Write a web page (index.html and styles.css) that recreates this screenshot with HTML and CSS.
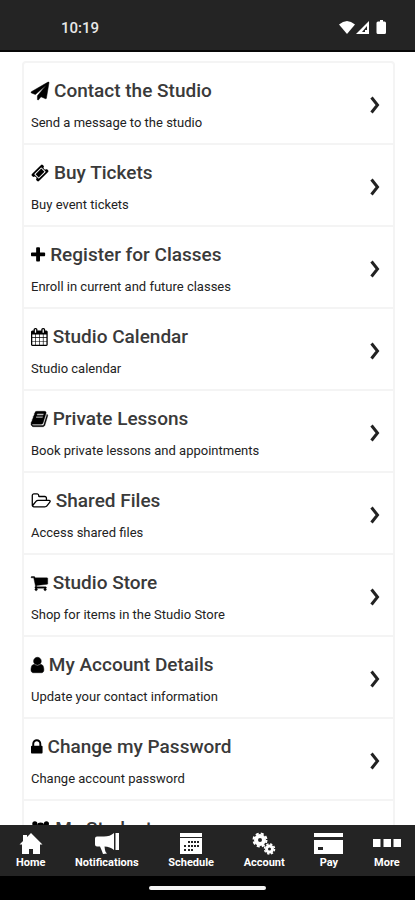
FILE: index.html
```html
<!DOCTYPE html>
<html lang="en">
<head>
<meta charset="utf-8">
<meta name="viewport" content="width=device-width, initial-scale=1">
<title>Studio</title>
<link rel="stylesheet" href="styles.css">
</head>
<body>
<header class="status">
  <time class="clock">10:19</time>
  <svg class="status-icons" width="50" height="18" viewBox="0 0 50 18" fill="#fff" aria-hidden="true">
    <path d="M1 5.500Q9 -1.500 17 5.500L9 15Z"/>
    <path d="M18 15L31 2V15Z"/>
    <path d="M24 13L29 7V13Z" fill="#242424"/>
    <path d="M27 11H29V13H27Z"/>
    <path d="M39.500 2.500H42V1H45V2.500H46.500Q48 2.500 48 4V13.500Q48 15 46.500 15H40Q38.500 15 38.500 13.500V4Q38.500 2.500 40 2.500Z"/>
  </svg>
</header>
<main class="content">
  <ul class="menu">
    <li><a class="row" href="#contact">
      <span class="text"><span class="title"><svg class="icon" viewBox="0 0 1792 1792" aria-hidden="true"><path stroke="#000" stroke-width="50" d="M1764 11q33 24 27 64l-256 1536q-5 29-32 45-14 8-31 8-11 0-24-5l-453-185-242 295q-18 23-49 23-13 0-22-4-19-7-30.500-23.500t-11.500-36.500v-349l864-1059-1069 925-395-162q-37-14-40-55-2-40 32-59l1664-960q15-9 32-9 20 0 36 11z"/></svg>Contact the Studio</span><span class="sub">Send a message to the studio</span></span>
      <svg class="chevron" viewBox="0 0 10 18" aria-hidden="true"><path d="M1.500 1.500L7.500 9L1.500 16.500"/></svg>
    </a></li>
    <li><a class="row" href="#tickets">
      <span class="text"><span class="title"><svg class="icon" viewBox="0 0 1792 1792" aria-hidden="true"><path fill-rule="evenodd" d="M1024 452l316 316-572 572-316-316zm-211 979l618-618q19-19 19-45t-19-45l-362-362q-18-18-45-18t-45 18l-618 618q-19 19-19 45t19 45l362 362q18 18 45 18t45-18zm889-637l-907 908q-37 37-90.500 37t-90.500-37l-126-125q56-56 56-136t-56-136-136-56-136 56l-125-126q-37-37-37-90.500t37-90.500l907-906q37-37 90.500-37t90.500 37l125 125q-56 56-56 136t56 136 136 56 136-56l126 125q37 37 37 90.500t-37 90.500z"/></svg>Buy Tickets</span><span class="sub">Buy event tickets</span></span>
      <svg class="chevron" viewBox="0 0 10 18" aria-hidden="true"><path d="M1.500 1.500L7.500 9L1.500 16.500"/></svg>
    </a></li>
    <li><a class="row" href="#register">
      <span class="text"><span class="title"><svg class="icon" viewBox="192 0 1408 1792" aria-hidden="true"><path d="M1600 736v192q0 40-28 68t-68 28h-416v416q0 40-28 68t-68 28h-192q-40 0-68-28t-28-68v-416h-416q-40 0-68-28t-28-68v-192q0-40 28-68t68-28h416v-416q0-40 28-68t68-28h192q40 0 68 28t28 68v416h416q40 0 68 28t28 68z"/></svg>Register for Classes</span><span class="sub">Enroll in current and future classes</span></span>
      <svg class="chevron" viewBox="0 0 10 18" aria-hidden="true"><path d="M1.500 1.500L7.500 9L1.500 16.500"/></svg>
    </a></li>
    <li><a class="row" href="#calendar">
      <span class="text"><span class="title"><svg class="icon" viewBox="64 0 1664 1792" aria-hidden="true"><path d="M192 1664h288v-288h-288v288zm352 0h320v-288h-320v288zm-352-352h288v-320h-288v320zm352 0h320v-320h-320v320zm-352-384h288v-288h-288v288zm736 736h320v-288h-320v288zm-384-736h320v-288h-320v288zm768 736h288v-288h-288v288zm-384-352h320v-320h-320v320zm-352-864v-288q0-13-9.500-22.500t-22.500-9.500h-64q-13 0-22.500 9.500t-9.500 22.500v288q0 13 9.500 22.500t22.500 9.500h64q13 0 22.500-9.500t9.500-22.500zm736 864h288v-320h-288v320zm-384-384h320v-288h-320v288zm384 0h288v-288h-288v288zm32-480v-288q0-13-9.500-22.500t-22.500-9.500h-64q-13 0-22.500 9.500t-9.500 22.500v288q0 13 9.500 22.500t22.500 9.500h64q13 0 22.500-9.500t9.500-22.500zm384-64v1280q0 52-38 90t-90 38h-1408q-52 0-90-38t-38-90v-1280q0-52 38-90t90-38h128v-96q0-66 47-113t113-47h64q66 0 113 47t47 113v96h384v-96q0-66 47-113t113-47h64q66 0 113 47t47 113v96h128q52 0 90 38t38 90z"/></svg>Studio Calendar</span><span class="sub">Studio calendar</span></span>
      <svg class="chevron" viewBox="0 0 10 18" aria-hidden="true"><path d="M1.500 1.500L7.500 9L1.500 16.500"/></svg>
    </a></li>
    <li><a class="row" href="#lessons">
      <span class="text"><span class="title"><svg class="icon" viewBox="64 0 1664 1792" aria-hidden="true"><path stroke="#000" stroke-width="40" d="M1703 478q40 57 18 129l-275 906q-19 64-76.500 107.500t-122.500 43.500h-923q-77 0-148.500-53.500t-99.500-131.500q-24-67-2-127 0-4 3-27t4-37q1-8-3-21.500t-3-19.500q2-11 8-21t16.500-23.500 16.500-23.500q23-38 45-91.500t30-91.500q3-10 .5-30t-.5-28q3-11 17-28t17-23q21-36 42-92t25-90q1-9-2.500-32t.5-28q4-13 22-30.500t22-22.500q19-26 42.500-84.500t27.500-96.500q1-8-3-25.500t-2-26.500q2-8 9-18t18-23 17-21q8-12 16.500-30.500t15-35 16-36 19.500-32 26.500-23.500 36-11.500 47.500 5.500l-1 3q38-9 51-9h761q74 0 114 56t18 130l-274 906q-36 119-71.500 153.500t-128.500 34.500h-869q-27 0-38 15-11 16-1 43 24 70 144 70h923q29 0 56-15.500t35-41.500l300-987q7-22 5-57 38 15 59 43zm-1064 2q-4 13 2 22.500t20 9.500h608q13 0 25.500-9.500t16.500-22.500l21-64q4-13-2-22.500t-20-9.500h-608q-13 0-25.500 9.500t-16.500 22.500zm-83 256q-4 13 2 22.500t20 9.500h608q13 0 25.500-9.500t16.500-22.500l21-64q4-13-2-22.500t-20-9.500h-608q-13 0-25.500 9.500t-16.500 22.500z"/></svg>Private Lessons</span><span class="sub">Book private lessons and appointments</span></span>
      <svg class="chevron" viewBox="0 0 10 18" aria-hidden="true"><path d="M1.500 1.500L7.500 9L1.500 16.500"/></svg>
    </a></li>
    <li><a class="row" href="#files">
      <span class="text"><span class="title"><svg class="icon" viewBox="0 0 1973 1792" aria-hidden="true"><path d="M1845 931q0-35-53-35h-1088q-40 0-85.500 21.500t-71.500 52.500l-294 363q-18 24-18 40 0 35 53 35h1088q40 0 86-22t71-53l294-363q18-22 18-39zm-1141-163h768v-160q0-40-28-68t-68-28h-576q-40 0-68-28t-28-68v-64q0-40-28-68t-68-28h-320q-40 0-68 28t-28 68v853l256-315q44-53 116-87.500t140-34.500zm1269 163q0 62-46 120l-295 363q-43 53-116 87.500t-140 34.500h-1088q-92 0-158-66t-66-158v-960q0-92 66-158t158-66h320q92 0 158 66t66 158v32h544q92 0 158 66t66 158v160h192q54 0 99 24.500t67 70.500q15 32 15 68z"/></svg>Shared Files</span><span class="sub">Access shared files</span></span>
      <svg class="chevron" viewBox="0 0 10 18" aria-hidden="true"><path d="M1.500 1.500L7.500 9L1.500 16.500"/></svg>
    </a></li>
    <li><a class="row" href="#store">
      <span class="text"><span class="title"><svg class="icon" viewBox="64 0 1664 1792" aria-hidden="true"><path stroke="#000" stroke-width="40" d="M704 1536q0 52-38 90t-90 38-90-38-38-90 38-90 90-38 90 38 38 90zm896 0q0 52-38 90t-90 38-90-38-38-90 38-90 90-38 90 38 38 90zm128-1088v512q0 24-16.500 42.500t-40.500 21.500l-1044 122q13 60 13 70 0 16-24 64h920q26 0 45 19t19 45-19 45-45 19h-1024q-26 0-45-19t-19-45q0-11 8-31.500t16-36 21.500-40 15.500-29.500l-177-823h-204q-26 0-45-19t-19-45 19-45 45-19h256q16 0 28.500 6.500t19.500 15.500 13 24.500 8 26 5.500 29.500 4.500 26h1201q26 0 45 19t19 45z"/></svg>Studio Store</span><span class="sub">Shop for items in the Studio Store</span></span>
      <svg class="chevron" viewBox="0 0 10 18" aria-hidden="true"><path d="M1.500 1.500L7.500 9L1.500 16.500"/></svg>
    </a></li>
    <li><a class="row" href="#account-details">
      <span class="text"><span class="title"><svg class="icon" viewBox="256 0 1280 1792" aria-hidden="true"><path stroke="#000" stroke-width="50" d="M1536 1399q0 109-62.500 187t-150.500 78h-854q-88 0-150.500-78t-62.500-187q0-85 8.500-160.500t31.500-152 58.500-131 94-89 134.500-34.500q131 128 313 128t313-128q76 0 134.500 34.500t94 89 58.500 131 31.500 152 8.500 160.500zm-256-887q0 159-112.500 271.500t-271.500 112.500-271.500-112.500-112.500-271.500 112.500-271.500 271.500-112.500 271.500 112.500 112.500 271.500z"/></svg>My Account Details</span><span class="sub">Update your contact information</span></span>
      <svg class="chevron" viewBox="0 0 10 18" aria-hidden="true"><path d="M1.500 1.500L7.500 9L1.500 16.500"/></svg>
    </a></li>
    <li><a class="row" href="#password">
      <span class="text"><span class="title"><svg class="icon" viewBox="320 0 1152 1792" aria-hidden="true"><path d="M640 768h512v-192q0-106-75-181t-181-75-181 75-75 181v192zm832 96v576q0 40-28 68t-68 28h-960q-40 0-68-28t-28-68v-576q0-40 28-68t68-28h32v-192q0-184 132-316t316-132 316 132 132 316v192h32q40 0 68 28t28 68z"/></svg>Change my Password</span><span class="sub">Change account password</span></span>
      <svg class="chevron" viewBox="0 0 10 18" aria-hidden="true"><path d="M1.500 1.500L7.500 9L1.500 16.500"/></svg>
    </a></li>
    <li><a class="row" href="#students">
      <span class="text"><span class="title"><svg class="icon" viewBox="0 0 1920 1792" aria-hidden="true"><circle cx="384" cy="384" r="256"/><circle cx="1536" cy="384" r="256"/><circle cx="960" cy="640" r="384"/><path d="M0 1000Q0 640 190 640Q380 760 520 690Q520 860 620 1000H420L0 1000ZM1920 1000Q1920 640 1730 640Q1540 760 1400 690Q1400 860 1300 1000ZM320 1400Q320 960 620 960Q960 1200 1300 960Q1600 960 1600 1400Q1600 1664 1380 1664H540Q320 1664 320 1400Z"/></svg>My Students</span></span>
      <svg class="chevron" viewBox="0 0 10 18" aria-hidden="true"><path d="M1.500 1.500L7.500 9L1.500 16.500"/></svg>
    </a></li>
  </ul>
</main>
<nav class="tabs">
  <a class="tab" href="#home"><svg width="24" height="24" viewBox="0 0 24 24" aria-hidden="true"><path d="M12 1L23.500 12.500H21V22H14V17H10V22H3V12.500H.5Z"/><path d="M4 3H8V10H4Z"/></svg>Home</a>
  <a class="tab" href="#notifications"><svg width="26" height="24" viewBox="0 0 26 24" aria-hidden="true"><path d="M21.500 1H25V18H21.500ZM1 6.500Q1 4.500 3 4.500H10Q16 4.500 20 1V18Q16 14.500 10.500 14.500L11 18Q11.500 21 13 21.500L9 22Q8 19 6 14.500H3Q1 14.500 1 12.500Z"/></svg>Notifications</a>
  <a class="tab" href="#schedule"><svg width="22" height="24" viewBox="0 0 22 24" aria-hidden="true"><path d="M0 1H22V5H0ZM0 6H22V22H0Z"/><path fill="#242424" d="M8 9h2v2H8zm3 0h2v2h-2zm3 0h2v2h-2zm3 0h2v2h-2zM4 13h2v2H4zm4 0h2v2H8zm3 0h2v2h-2zm3 0h2v2h-2zm3 0h2v2h-2zM4 17h2v2H4zm4 0h2v2H8zm3 0h2v2h-2z"/></svg>Schedule</a>
  <a class="tab" href="#account"><svg width="24" height="24" viewBox="0 0 24 24" aria-hidden="true"><g fill="none" stroke="#fff"><circle cx="8" cy="8" r="4" stroke-width="4"/><circle cx="8" cy="8" r="6.500" stroke-width="2" stroke-dasharray="3 2.105"/><circle cx="17.500" cy="17" r="3" stroke-width="3"/><circle cx="17.500" cy="17" r="5" stroke-width="1.500" stroke-dasharray="2.300 1.627"/></g></svg>Account</a>
  <a class="tab" href="#pay"><svg width="29" height="24" viewBox="0 0 29 24" aria-hidden="true"><path d="M0 1H29V5H0ZM0 8H29V22H0Z"/><path fill="#242424" d="M4 15H9V18H4Z"/></svg>Pay</a>
  <a class="tab" href="#more"><svg width="28" height="24" viewBox="0 0 28 24" aria-hidden="true"><path d="M0 7H7.500V15H0ZM10.500 7H18V15H10.500ZM20.500 7H28V15H20.500Z"/></svg>More</a>
</nav>
<div class="system-bar"><span class="handle"></span></div>
</body>
</html>
```
FILE: styles.css
```css
* { box-sizing: border-box; }

body {
  margin: 0;
  height: 100vh;
  display: flex;
  flex-direction: column;
  background: #fff;
  color: #3a3a3a;
  font-family: Roboto, "Liberation Sans", sans-serif;
}

a { color: inherit; text-decoration: none; }

.status {
  display: flex;
  align-items: center;
  justify-content: space-between;
  height: 52px;
  flex: none;
  padding: 6px 27px 0 61px;
  background: #242424;
  border-bottom: 2px solid #080808;
  color: #e8e8e8;
}

.clock { font-size: 15px; font-weight: 500; line-height: 20px; }

.content {
  flex: 1;
  min-height: 0;
  padding: 9px 20px 0 22px;
  overflow-y: auto;
  scrollbar-width: none;
}

.menu {
  margin: 0;
  padding: 0;
  list-style: none;
  border: 2px solid #f4f4f4;
  border-radius: 4px;
}

.menu li + li { border-top: 2px solid #f4f4f4; }

.row {
  display: flex;
  align-items: center;
  justify-content: space-between;
  height: 80px;
  padding: 4px 13px 0 7px;
}

.text { display: flex; flex-direction: column; gap: 12px; min-height: 52px; }

.title {
  display: flex;
  align-items: center;
  gap: 5px;
  font-size: 19px;
  font-weight: 500;
  line-height: 24px;
}

.icon { height: 18px; width: auto; fill: #000; overflow: visible; }

.sub { font-size: 13px; font-weight: 400; line-height: 16px; color: #222; }

.chevron {
  width: 10px;
  height: 18px;
  fill: none;
  stroke: #222;
  stroke-width: 3;
}

.tabs {
  display: flex;
  justify-content: space-between;
  flex: none;
  height: 51px;
  padding: 7px 14px 0 16px;
  background: #242424;
}

.tab {
  display: flex;
  flex-direction: column;
  align-items: center;
  color: #fff;
  font-size: 11px;
  font-weight: 700;
  line-height: 14px;
}

.tab svg { fill: #fff; }

.system-bar {
  display: flex;
  justify-content: center;
  align-items: center;
  flex: none;
  height: 24px;
  background: #000;
}

.handle { width: 28%; height: 4px; border-radius: 2px; background: #f4f4f4; }
```
